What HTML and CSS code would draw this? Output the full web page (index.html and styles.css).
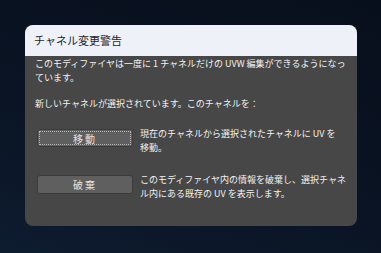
FILE: index.html
```html
<!DOCTYPE html>
<html lang="ja">
  <head>
    <meta charset="UTF-8" />
    <meta name="viewport" content="width=device-width, initial-scale=1.0" />
    <title>チャネル変更警告</title>
    <link rel="stylesheet" href="styles.css">
  </head>
  <body>
    <div class="dialog">
      <div class="title_bar">チャネル変更警告</div>
      <div class="content">
        <p class="msg">このモディファイヤは一度に 1 チャネルだけの UVW 編集ができるようになっ<br>ています。</p>
        <p class="msg question">新しいチャネルが選択されています。このチャネルを：</p>

        <div class="choice first">
          <button class="btn -focus" type="button">移動</button>
          <p class="desc">現在のチャネルから選択されたチャネルに UV を<br>移動。</p>
        </div>
        <div class="choice">
          <button class="btn" type="button">破棄</button>
          <p class="desc">このモディファイヤ内の情報を破棄し、選択チャネ<br>ル内にある既存の UV を表示します。</p>
        </div>
      </div>
    </div>
  </body>
</html>
```

FILE: styles.css
```css
* {
  box-sizing: border-box;
}
body {
  margin: 0;
  padding: 25px;
  height: 253px;
  background: linear-gradient(20deg, #0e1c30 0%, #0a1424 40%, #080f1c 100%);
  font-family: "Noto Sans CJK JP", "Liberation Sans", sans-serif;
}
div.dialog {
  width: 332px;
  height: 201px;
  border-radius: 8px;
  overflow: hidden;
  background: #474747;
}
div.title_bar {
  height: 31px;
  line-height: 31px;
  padding-left: 9px;
  background: #eef1f8;
  color: #1e1e1e;
  font-size: 11px;
}
div.content {
  padding: 1px 8px 0 10px;
  color: #f2f2f2;
  font-size: 9px;
  line-height: 14px;
}
p.msg {
  margin: 0;
  white-space: nowrap;
}
p.question {
  margin-top: 12px;
}
div.choice {
  display: flex;
  align-items: flex-start;
  gap: 7px;
  margin-top: 18px;
}
div.choice.first {
  margin-top: 16px;
}
button.btn {
  flex-shrink: 0;
  width: 96px;
  height: 19px;
  margin: 2px 0 0 2px;
  padding: 0;
  border: 1px solid #3c3c3c;
  border-radius: 3px;
  background: #5f5f5f;
  color: #e4e4e4;
  font-family: inherit;
  font-size: 10px;
  letter-spacing: 2px;
}
button.-focus {
  height: 18px;
  outline: 1px dotted #b8b8b8;
  outline-offset: -3px;
}
p.desc {
  margin: 0;
  white-space: nowrap;
}
```
